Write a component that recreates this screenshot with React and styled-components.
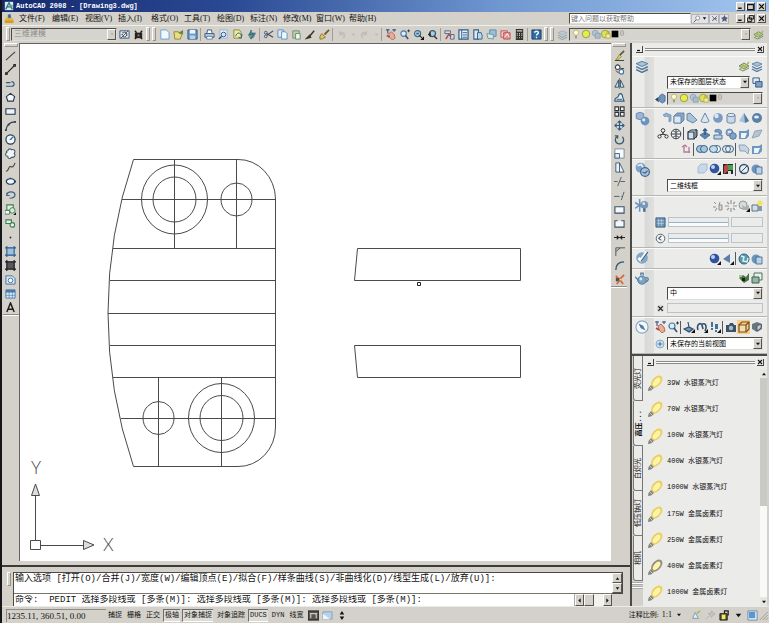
import React from 'react';
import styled, { createGlobalStyle, css } from 'styled-components';

const GlobalStyle = createGlobalStyle`
  * {
    box-sizing: border-box;
  }
  html, body, #root {
    height: 100%;
  }
  body {
    margin: 0;
    overflow: hidden;
    background: #d4d1ca;
  }
  button, input, select {
    margin: 0;
    padding: 0;
    border: 0;
    border-radius: 0;
    background: none;
    color: inherit;
    font: inherit;
  }
  ul {
    margin: 0;
    padding: 0;
    list-style: none;
  }
  svg {
    display: block;
    flex: none;
  }
`;

const mono = '"Liberation Mono", "Noto Sans CJK SC", monospace';
const serif = '"Liberation Serif", "Noto Sans CJK SC", serif';

const raised = css`
  border: 1px solid;
  border-color: #fbfbf9 #55534f #55534f #fbfbf9;
  background: #d4d1ca;
`;

const sunken = css`
  border: 1px solid;
  border-color: #4c4b48 #dfddd8 #dfddd8 #4c4b48;
`;

const Window = styled.div`
  display: flex;
  flex-direction: column;
  height: 100%;
  border-left: 2px solid #17171a;
  background: #d4d1ca;
  color: #111;
  font: 8px/10px ${serif};
`;

/* title bar and menus */

const TitleBar = styled.header`
  display: flex;
  align-items: center;
  gap: 2px;
  height: 12px;
  padding: 0 3px 0 2px;
  background: linear-gradient(90deg, #15296f, #2b4a94 30%, #6f97d0 65%, #a3c6ee);
  color: #fff;
`;

const Title = styled.h1`
  flex: 1;
  margin: 0;
  font: bold 7px/10px ${mono};
`;

const Caption = styled.div`
  display: flex;
  gap: 1px;
`;

const CaptionButton = styled.button`
  ${raised}
  display: grid;
  place-items: center;
  width: 9px;
  height: 9px;
  &:last-child {
    margin-left: 1px;
  }
`;

const MenuBar = styled.nav`
  display: flex;
  align-items: center;
  height: 13px;
  padding: 0 3px 0 2px;
`;

const MenuItem = styled.button`
  width: 33px;
  text-align: left;
  white-space: nowrap;
`;

const MenuLogo = styled.span`
  width: 15px;
`;

const Spacer = styled.div`
  flex: 1;
`;

const Search = styled.input`
  ${sunken}
  width: 122px;
  height: 11px;
  padding-left: 1px;
  background: #fff;
  font-size: 7px;
  &::placeholder {
    color: #777;
  }
`;

const InfoButton = styled.button`
  display: flex;
  align-items: center;
  justify-content: center;
  width: ${(p) => (p.$wide ? 18 : 10)}px;
  height: 10px;
  border: 1px solid #b4b5bb;
  background: #e3e3e6;
`;

const InfoGroup = styled.div`
  display: flex;
  margin-right: 7px;
`;

/* tool bars */

const ToolRow = styled.div`
  display: flex;
  align-items: center;
  height: 17px;
  padding: 0 4px 0 3px;
  border-top: 1px solid #efeeea;
`;

const Grip = styled.span`
  flex: none;
  width: ${(p) => (p.$flat ? '14px' : '4px')};
  height: ${(p) => (p.$flat ? '4px' : '14px')};
  margin: ${(p) => (p.$flat ? '1px 0' : '0 1px')};
  border: 1px solid;
  border-color: #fff #96938d #96938d #fff;
`;

const Tool = styled.button`
  display: grid;
  place-items: center;
  flex: none;
  width: ${(p) => p.$w || 14}px;
  height: 14px;
  opacity: ${(p) => (p.$faint ? 0.45 : 1)};
  background: ${(p) => (p.$on ? '#f8cd87' : 'none')};
`;

const Divider = styled.i`
  flex: none;
  width: 1px;
  height: 13px;
  margin: 0 1px;
  background: ${(p) => (p.$dark ? '#55575c' : '#a19e98')};
`;

const Combo = styled.div`
  ${sunken}
  display: flex;
  align-items: center;
  flex: ${(p) => (p.$width ? 'none' : 1)};
  width: ${(p) => (p.$width ? p.$width + 'px' : 'auto')};
  min-width: 0;
  height: 13px;
  padding-left: 1px;
  background: ${(p) => (p.$off ? '#d6d4ce' : '#fff')};
  color: ${(p) => (p.$off ? '#8d8b87' : '#000')};
  font-size: ${(p) => p.$size || 7}px;
`;

const Select = styled.select`
  flex: 1;
  min-width: 0;
  padding-left: 1px;
  appearance: none;
  opacity: 1;
  outline: none;
`;

const Arrow = styled.span`
  ${raised}
  display: grid;
  place-items: center;
  flex: none;
  width: 9px;
  height: 100%;
`;

/* body */

const Body = styled.main`
  display: flex;
  flex: 1;
  min-height: 0;
`;

const Workspace = styled.div`
  display: flex;
  flex-direction: column;
  flex: 1;
  min-width: 0;
`;

const Stage = styled.div`
  display: flex;
  flex: 1;
  min-height: 0;
`;

const ToolColumn = styled.div`
  display: flex;
  flex-direction: column;
  align-items: center;
  flex: none;
  padding-right: ${(p) => (p.$right ? 3 : 0)}px;
  width: ${(p) => (p.$right ? 19 : 17)}px;
`;

const ColumnEnd = styled.i`
  width: 16px;
  height: 2px;
  border-top: 1px solid #908d87;
  background: #fff;
`;

const Canvas = styled.div`
  flex: 1;
  min-width: 0;
  margin: 1px 0 4px;
  border: solid #65635f;
  border-width: 1px 0 0 1px;
  background: #fff;
`;

const Command = styled.section`
  display: flex;
  height: 41px;
  padding: 5px 7px 0 4px;
  border-top: 2px solid #3c3b39;
  font: 9px/11px ${mono};
`;

const CommandText = styled.div`
  display: flex;
  flex-direction: column;
  flex: 1;
  min-width: 0;
  margin-left: 1px;
  border: solid #4a4946;
  border-width: 1px 0 0 1px;
  background: #fff;
`;

const History = styled.div`
  height: 21px;
  border-bottom: 1px solid #77756f;
  padding-left: 1px;
  line-height: 12px;
  white-space: nowrap;
`;

const Prompt = styled.div`
  display: flex;
  flex: 1;
  min-height: 0;
`;

const PromptInput = styled.input`
  flex: 1;
  min-width: 0;
  padding-left: 1px;
  outline: none;
`;

const ScrollButton = styled.button`
  ${raised}
  display: grid;
  place-items: center;
  width: ${(p) => p.$w || 9}px;
  height: ${(p) => p.$h || 10}px;
`;

const VScroll = styled.div`
  display: flex;
  flex-direction: column;
  width: 11px;
  height: 22px;
  border: solid #4a4946;
  border-width: 1px 1px 1px 0;
`;

const HScroll = styled.div`
  display: flex;
  width: 38px;
  border-left: 1px solid #aaa;
  background: #f3f2ef;
`;

const HThumb = styled.i`
  ${raised}
  width: 10px;
  height: 12px;
`;

/* dashboard */

const Side = styled.aside`
  display: flex;
  flex-direction: column;
  flex: none;
  width: 139px;
  margin-top: 1px;
  border-left: 2px solid #4b4a48;
  border-right: 2px solid #d4d1ca;
  background: #ebebea;
`;

const PaletteBar = styled.div`
  display: flex;
  align-items: center;
  gap: 2px;
  height: 13px;
  padding: 0 3px 0 4px;
`;

const PaletteGrip = styled.span`
  flex: 1;
  height: 3px;
  border: solid #8b8984;
  border-width: 1px 0;
  background: #fff;
`;

const MiniButton = styled.button`
  display: grid;
  place-items: center;
  width: 7px;
  height: 7px;
  border: solid #444;
  border-width: 0 1px 1px 0;
`;

const Panel = styled.section`
  display: flex;
  height: ${(p) => p.$h}px;
  border-bottom: 1px solid #b5b5b3;
  border-top: 1px solid #fafafa;
`;

const PanelIcon = styled.div`
  flex: none;
  width: 22px;
  padding: 2px 0 0 3px;
  background: linear-gradient(90deg, #ebebea 55%, #d9d9d7 60%, #dfdfdd);
`;

const PanelRows = styled.div`
  display: flex;
  flex-direction: column;
  justify-content: space-evenly;
  flex: 1;
  min-width: 0;
  padding-right: 4px;
`;

const Row = styled.div`
  display: flex;
  align-items: center;
  justify-content: flex-end;
  gap: ${(p) => (p.$gap ? p.$gap + 'px' : 0)};
  height: 14px;
`;

const Indent = styled.div`
  display: flex;
  justify-content: center;
  flex: none;
  width: 12px;
`;

const Slider = styled.input`
  appearance: none;
  flex: 2;
  min-width: 0;
  height: 10px;
  border: 1px solid #b9c4cd;
  background: linear-gradient(#ebebea 4px, #93b2c8 4px 5px, #fafafa 5px);
  &::-webkit-slider-thumb {
    appearance: none;
    width: 1px;
    height: 8px;
  }
`;

const Field = styled.input`
  flex: 1;
  min-width: 0;
  height: 10px;
  border: 1px solid #b9c4cd;
`;

/* tool palettes */

const Palettes = styled.section`
  display: flex;
  flex: 1;
  min-height: 0;
  border-top: 2px solid #4b4a48;
`;

const Tabs = styled.div`
  display: flex;
  flex-direction: column;
  flex: none;
  width: 11px;
  background: #d4d1ca;
`;

const Tab = styled.button`
  display: flex;
  align-items: center;
  justify-content: center;
  height: 45px;
  margin-left: 1px;
  border: solid #777;
  border-width: 0 ${(p) => (p.$active ? 0 : 1)}px 1px 1px;
  border-bottom-left-radius: 3px;
  background: #ebebea;
  font: ${(p) => (p.$active ? 'bold' : 'normal')} 7px/8px ${mono};
`;

const TabText = styled.span`
  writing-mode: vertical-rl;
  text-orientation: sideways;
  transform: rotate(180deg);
  white-space: nowrap;
`;

const TabGrip = styled.i`
  height: 3px;
  margin-top: 1px;
  border: solid #aaa;
  border-width: 1px 0;
  background: #fff;
`;

const PaletteMain = styled.div`
  display: flex;
  flex-direction: column;
  flex: 1;
  min-width: 0;
`;

const PaletteContent = styled.div`
  display: flex;
  flex: 1;
  min-height: 0;
`;

const Lamps = styled.ul`
  display: flex;
  flex-direction: column;
  flex: 1;
  padding-top: 1px;
  font: 7px/9px ${mono};
`;

const LampItem = styled.li`
  display: flex;
  flex: 1;
`;

const LampButton = styled.button`
  display: flex;
  align-items: center;
  gap: 3px;
  padding-left: 3px;
  white-space: nowrap;
`;

const Scroll = styled.div`
  display: flex;
  flex-direction: column;
  align-items: center;
  width: 7px;
  background: #f9f9f8;
`;

const ScrollEnd = styled.button`
  display: grid;
  place-items: center;
  width: 7px;
  height: 9px;
  background: #e6e6e4;
`;

const Thumb = styled.i`
  width: 7px;
  height: 128px;
  background: #c9c9c6;
`;

/* status bar */

const StatusBar = styled.footer`
  display: flex;
  align-items: center;
  height: 17px;
  padding: 0 1px 0 4px;
  border-top: 1px solid #eceae6;
  white-space: nowrap;
`;

const Coords = styled.output`
  width: 100px;
  height: 13px;
  border: solid #8f8c86;
  border-width: 1px 0 0 1px;
  font-size: 9px;
  line-height: 12px;
`;

const Toggle = styled.button`
  display: flex;
  align-items: center;
  height: 13px;
  margin-right: 2px;
  padding: 0 1px;
  border: 1px solid;
  border-width: 1px 0 1px 1px;
  border-color: ${(p) => (p.$on ? '#6f6d69 #fff #fff #6f6d69' : 'transparent')};
  background: ${(p) => (p.$on ? '#dedcd7' : 'none')};
  font: 7px/10px ${mono};
`;

const Scale = styled.button`
  display: flex;
  align-items: center;
  gap: 3px;
  margin-right: 6px;
  font-size: 8px;
`;

const ScaleLabel = styled.span`
  font-size: 7px;
`;

const B = '#36587f';
const L = '#8fb4d6';
const G = '#3f7d52';

// every glyph is drawn on a 12 x 12 grid
const glyphs = {
  logo: <><path d="M1 1h10v10H1z" fill="#dfe9ec" /><path d="M2 10L6 2l4 8M3 7h7" stroke="#287a78" fill="none" strokeWidth="1.6" /><path d="M6 4l5 1-3 3z" fill="#5ca298" /></>,
  doc: <><path d="M1 7l4-5 2 3 3 1 1 5H1z" fill="#e7b93a" /><path d="M4 2l3-1 1 4-3 1z" fill="#3c6ea8" /><path d="M1 8h9v3H1z" fill="#d79b20" /></>,
  gear: <><path d="M1 2h10v8H1z" fill="#e5edf2" stroke={B} /><circle cx="6" cy="6" r="2.5" fill="none" stroke="#555" strokeWidth="1.5" strokeDasharray="1.4 .7" /><path d="M2 10l8-8" stroke={B} /></>,
  home: <><path d="M2 2l2 2M10 2L8 4M2 11l2-2M10 11L8 9" stroke="#222" strokeWidth="1.6" /><path d="M2 4h8v6H2z" fill="#222" /><path d="M5 6h2v2H5z" fill="#888" /></>,
  page: <path d="M2 1h6l3 3v7H2z" fill="#eff8ff" stroke="#6f9cc6" />,
  open: <><path d="M1 3h5l1 2h3l-2 6H2z" fill="#e9dc82" stroke="#93862f" /><path d="M6 4l5-3v5" fill="#5b8c3f" /></>,
  save: <><path d="M1 1h10v10H1z" fill="#649bcb" stroke={B} /><path d="M3 1h6v4H3z" fill="#eef5fb" /><path d="M3 7h6v4H3z" fill="#b9d0e6" /></>,
  print: <><path d="M3 5l1-4h4l1 4" fill="#fff" stroke={B} /><path d="M1 5h10v4H1z" fill="#b8c9dc" stroke={B} /><path d="M3 8h6v3H3z" fill="#fff" stroke={B} strokeWidth=".7" /></>,
  preview: <><path d="M2 1h8v9H2z" fill="#e4f1fb" stroke={L} /><circle cx="6" cy="6" r="2.5" fill="#cfe6f8" stroke={B} /><path d="M4 8l-3 3" stroke={B} strokeWidth="1.6" /></>,
  publish: <><path d="M2 1h6l2 3v6H2z" fill="#ecec9c" stroke="#7f8c45" /><path d="M4 8c1-5 6-4 6-1l1-1-1 4-3-1" fill="none" stroke={B} /></>,
  dwf: <><path d="M2 6l4-3 5 2-3 5-4 0z" fill="#6d9a8d" /><path d="M6 1l-2 5 5-1-4 6" fill="none" stroke="#3d7085" strokeWidth="1.6" /></>,
  cut: <><path d="M11 2L4 7M11 9L4 5" stroke="#445" strokeWidth="1.2" /><circle cx="3" cy="4" r="1.5" fill="none" stroke={B} /><circle cx="3" cy="8" r="1.5" fill="none" stroke={B} /></>,
  copy: <><path d="M1 1h6v8H1z" fill="#d9ecfa" stroke="#5d8ebb" /><path d="M5 3h4l2 2v6H5z" fill="#eff8ff" stroke="#5d8ebb" /></>,
  paste: <><path d="M2 2h7v8H2z" fill="#c9c9a5" stroke="#6a8f74" /><path d="M5 5h5v6H5z" fill="#eefaf2" stroke="#5e8b78" /></>,
  match: <path d="M10 2L5 8M5 7l-3 3 4-1z" stroke="#37352c" strokeWidth="1.6" fill="#37352c" />,
  brush: <><path d="M11 1L6 6" stroke="#735c2a" strokeWidth="2" /><path d="M3 5l4 4-4 2H1V8z" fill="#e2c35a" stroke="#70612a" strokeWidth=".8" /></>,
  undo: <path d="M8 10C11 6 8 2 4 5M4 2v4h4" fill="none" stroke="#aaa69f" strokeWidth="1.4" />,
  redo: <path d="M4 10C1 6 4 2 8 5M8 2v4H4" fill="none" stroke="#aaa69f" strokeWidth="1.4" />,
  dot: <path d="M4 5h4L6 8z" fill="#aaa69f" />,
  pan: <><path d="M4 5l3-2 3 3 1 4-3 2-3-3z" fill="#e9ad96" stroke="#9b5a4c" strokeWidth=".8" /><path d="M1 1h4M3 0v5M8 1h4M10 0v3" stroke="#3d5d86" strokeWidth="1.200" /><path d="M2 7l3 2" stroke="#b44646" strokeWidth="1.8" /></>,
  zoom: <><circle cx="5" cy="5" r="3" fill="#d8edfa" stroke="#4c7698" strokeWidth="1.2" /><path d="M7 7l3 4" stroke="#42526b" strokeWidth="1.7" /><path d="M9 2h3M10.500 .5v3" stroke="#333" /></>,
  zoomWin: <><circle cx="5" cy="5" r="3.300" fill="#b9d9ed" stroke="#3f6987" strokeWidth="1.3" /><path d="M3.500 4h3v2h-3z" fill="#426c8c" /><path d="M7 7l3 3" stroke="#333" strokeWidth="1.4" /><path d="M12 8v4H8z" fill="#111" /></>,
  zoomPrev: <><circle cx="6" cy="5" r="3.300" fill="#aecce0" stroke="#36586f" strokeWidth="1.3" /><path d="M8 8l3 3" stroke="#333" strokeWidth="1.5" /><path d="M1 6l3-3v6z" fill="#222" /></>,
  props: <><path d="M1 2h6v3H1zM7 6h4v5H7z" fill="#d9dce8" stroke="#555f80" /><path d="M2 11l3-5 3 2" stroke="#a64646" fill="none" strokeWidth="1.5" /></>,
  sheet: <><path d="M1 1h10v10H1z" fill="#e6f1f8" stroke="#31608d" strokeWidth="1.3" /><path d="M4 1v10M5 4h5M5 6.500h5M5 9h5" stroke="#31608d" /></>,
  palette: <><path d="M2 1h5v10H2z" fill="#dceaf3" stroke="#31608d" strokeWidth="1.2" /><path d="M6 4h4l1 3v4H6z" fill="#bcd6e7" stroke="#31608d" /></>,
  sheetSet: <><path d="M4 1h7v7H4z" fill="#9cc0d8" stroke="#5d89a9" /><path d="M1 5l7 1v5l-6-1z" fill="#d7e7e9" stroke="#70969e" /></>,
  markup: <><path d="M1 2h7v7H1z" fill="#f3c5c5" stroke="#bb5454" /><path d="M4 4h7v7H4z" fill="#e69090" stroke="#bb5454" /><path d="M5 9l3-4 2 4" stroke="#fff" fill="none" /></>,
  calc: <><path d="M2 0h8v12H2z" fill="#2f302e" /><path d="M3 2h6M3 5h1M5.500 5h1M8 5h1M3 7h1M5.500 7h1M8 7h1M3 9.500h1M5.500 9.500h1M8 9.500h1" stroke="#d4d1ca" strokeWidth="1.2" /></>,
  help: <><path d="M1 1h10v10H1z" fill="#2e6ba9" stroke="#1c3f70" /><path d="M4 4c0-2 4-2 4 0S6 5 6 7M6 8.500v1.500" stroke="#fff" fill="none" strokeWidth="1.5" /></>,
  layers: <><path d="M1 4l5-2 5 2-5 2.500z" fill="#a8c2da" stroke="#51779e" strokeWidth=".8" /><path d="M1 6.500l5 2.500 5-2.500M1 9l5 2.500L11 9" fill="none" stroke="#51779e" strokeWidth="1.300" /></>,
  layerGo: <><path d="M1 6l5-3 5 3-5 3z" fill="#c3cfbb" stroke="#6f8a6c" /><path d="M1 9l4 2 6-3" fill="none" stroke="#6f8a6c" /><path d="M2 10l3-5 2 2 4-5" stroke="#a8b843" fill="none" strokeWidth="1.5" /></>,
  layerWin: <><path d="M1 1h7v6H1z" fill="#dce9f4" stroke={B} /><path d="M4 5h7v6H4z" fill="#7ba2c7" stroke={B} /></>,
  layerPrev: <><path d="M5 3l3-2 3 2v6l-3 2-3-2z" fill="#6f97c0" stroke="#3d618a" strokeWidth=".8" /><path d="M4 4L0 7l4 3z" fill="#28466a" /></>,
  bulb: <><circle cx="6" cy="4.500" r="3.200" fill="#fdfbcf" stroke="#aa9d50" strokeWidth=".8" /><path d="M5 8h2v3H5z" fill="#8e8c79" /></>,
  sun: <circle cx="6" cy="6" r="4.500" fill="#e6ee4c" stroke="#8d9134" />,
  freeze: <><circle cx="5" cy="5" r="3.500" fill="#b6c7d5" stroke="#8a9fae" /><path d="M5 5h6v6H5z" fill="#a9bccb" stroke="#8a9fae" /></>,
  lock: <><circle cx="5" cy="6" r="4.500" fill="#dce15c" stroke="#969a38" /><path d="M6 6h5v5H6z" fill="#f3ef9a" stroke="#b0ab48" /><path d="M7 6V3h3v3" fill="none" stroke="#b0ab48" /></>,
  black: <path d="M1 1h10v10H1z" fill="#000" />,
  find: <><circle cx="7" cy="4.500" r="3" fill="#fff" stroke="#667" /><path d="M5 7l-4 4" stroke="#667" strokeWidth="1.500" /></>,
  comm: <path d="M2 2l8 8M10 2L6 6l4 0M2 10l4-3H3" stroke="#4c566e" fill="none" strokeWidth="1.300" />,
  star: <path d="M6 0l2 4 4 .5-3 3 1 4.500-4-2.500L2 12l1-4.500-3-3L4 4z" fill="#4d5d7a" />,
  line: <path d="M1 11L11 2" stroke="#3b4044" strokeWidth="1.200" />,
  xline: <><path d="M1 11L11 1" stroke="#222" strokeWidth="1.400" /><path d="M0 9h3v3H0zM9 0h3v3H9z" fill="#333" /></>,
  pline: <path d="M1 9h6c4 0 4-5 0-5M1 5h5" fill="none" stroke={B} strokeWidth="1.200" />,
  polygon: <path d="M6 1.500l4.500 3.500L9 10H3L1.500 5z" fill="#f5f8fb" stroke="#23374f" strokeWidth="1.200" />,
  rect: <path d="M1 3h10v6H1z" fill="#eef4fa" stroke="#23374f" strokeWidth="1.200" />,
  arc: <><path d="M1 11C2 5 5 2 11 2" fill="none" stroke="#333f4e" strokeWidth="1.200" /><path d="M0 10h2v2H0zM3 4h2v2H3zM10 1h2v2h-2z" fill="#333f4e" /></>,
  circle: <><circle cx="6" cy="6" r="5" fill="#f3f8fc" stroke="#23374f" strokeWidth="1.300" /><path d="M6 6l3-3M5 6h2" stroke="#2e7090" strokeWidth="1.300" /></>,
  cloud: <path d="M3 3c1-3 4-2 4-1 3-1 5 1 3 4 2 2 0 5-3 4-1 2-4 2-4-1-3 0-3-3-1-4C1 4 2 3 3 3z" fill="#f1f6f8" stroke="#4b5a67" strokeWidth="1.200" />,
  spline: <path d="M1 10c3 1 3-6 5-5s3 1 5-4" fill="none" stroke="#444" strokeWidth="1.200" />,
  ellipse: <><ellipse cx="6" cy="6" rx="4.500" ry="3" fill="#f4f8fc" stroke="#1f3d68" strokeWidth="1.300" /><path d="M1 5h1v2H1zM10 5h2v2h-2zM5 2h2v1H5z" fill="#1f3d68" /></>,
  earc: <path d="M2 5c1-4 8-4 9 0 0 3-3 4-6 4M2 3v3h3" fill="none" stroke="#3d6282" strokeWidth="1.300" />,
  insert: <><path d="M2 1h7v6H2z" fill="#e2efe2" stroke={G} strokeWidth="1.200" /><circle cx="8" cy="7" r="3" fill="#d3e7d3" stroke={G} /><path d="M0 7h5v4H0z" fill="#fff" stroke={G} /><path d="M12 9v3H9z" fill="#111" /></>,
  block: <><path d="M1 2h6v4H1z" fill="#e5f2e5" stroke={G} strokeWidth="1.200" /><circle cx="8" cy="7.500" r="2.500" fill="#e5f2e5" stroke={G} strokeWidth="1.200" /></>,
  point: <circle cx="6" cy="6" r="1" fill="#333" />,
  hatch: <><path d="M2 2h8v8H2z" fill="#9fc1e0" /><path d="M2 0v12M10 0v12M0 2h12M0 10h12" stroke="#2b5a8b" strokeWidth="1.200" /></>,
  gradient: <><path d="M2 2h8v8H2z" fill="#56585c" /><path d="M2 0v12M10 0v12M0 2h12M0 10h12" stroke="#1a1b1d" strokeWidth="1.300" /></>,
  region: <><path d="M1 2h7l3 3v6H1z" fill="#d5e8f5" stroke="#3f6f99" /><circle cx="6" cy="7" r="2.500" fill="#fff" stroke="#3f6f99" /></>,
  table: <><path d="M1 2h10v9H1z" fill="#d9ebf8" stroke="#4b7bab" /><path d="M1 2h10v3H1z" fill="#4b7bab" /><path d="M4.500 4v7M8 4v7M1 8h10" stroke="#4b7bab" strokeWidth=".7" /></>,
  textA: <path d="M2 11L6 1l4 10M3.500 8h5" fill="none" stroke="#1c1c1c" strokeWidth="1.600" />,
  erase: <><path d="M11 1L6 6" stroke="#4c5a3a" strokeWidth="1.800" /><path d="M6 5l2 2-4 4H2z" fill="#e6d36b" stroke="#7d7135" strokeWidth=".8" /><path d="M1 11.500h10" stroke="#333" /></>,
  copyObj: <><circle cx="4" cy="3.500" r="2.500" fill="#fff" stroke="#333f4e" strokeWidth="1.200" /><circle cx="8" cy="8.500" r="2.500" fill="#fff" stroke="#3f6f99" strokeWidth="1.200" /><path d="M2 7l3 3M7 5h4" stroke="#333" /></>,
  mirror: <><path d="M5 2v8H1zM7 2v8h4z" fill="#d7e5ee" stroke="#2f4b66" /><path d="M6 0v12" stroke="#2f4b66" strokeWidth=".6" /></>,
  offset: <><path d="M1 10c-1-5 4-3 4-6 0-3 4-3 4 0l2 6z" fill="#e3edf3" stroke="#315878" strokeWidth="1.200" /><path d="M3 8h6" stroke="#315878" /></>,
  array: <path d="M1 1h4v4H1zM7 1h4v4H7zM1 7h4v4H1zM7 7h4v4H7z" fill="#eef2f5" stroke="#30343a" strokeWidth="1.200" />,
  move: <path d="M6 1v10M1 6h10M4 3l2-2 2 2M4 9l2 2 2-2M3 4L1 6l2 2M9 4l2 2-2 2" fill="none" stroke="#2d5b87" strokeWidth="1.200" />,
  rotate: <path d="M3 3a4.500 4.500 0 1 0 6 0M1 2h3v3" fill="none" stroke="#385a72" strokeWidth="1.400" />,
  scale: <><path d="M1 1h10v10H1z" fill="#fafcff" stroke="#758b9d" /><path d="M1 6h5v5H1z" fill="#dfeaf1" stroke="#41627d" /></>,
  stretch: <path d="M2 1h4v10H2zM6 1l5 10H6" fill="#eef4f9" stroke="#3d5972" />,
  trim: <path d="M0 6h4M7 6h5M8 1L4 11" stroke="#4e5d6a" fill="none" />,
  extend: <path d="M0 7h6M8 7h1M11 2L8 11" stroke="#4e5d6a" fill="none" />,
  breakAt: <path d="M1 3h10v7H1z" fill="#f4f8fb" stroke="#3b5068" strokeWidth="1.200" />,
  breakObj: <path d="M4 3H1v7h10V3H8" fill="#f4f8fb" stroke="#3b5068" strokeWidth="1.200" />,
  join: <path d="M0 6h12M3 4l2 2-2 2M9 4L7 6l2 2" stroke="#222" fill="none" strokeWidth="1.200" />,
  chamfer: <path d="M2 11V6l5-4h5M2 6V2h5" stroke="#4a5158" fill="none" />,
  fillet: <path d="M2 11c0-6 3-9 9-9" stroke="#2f5879" fill="none" strokeWidth="1.500" />,
  explode: <><path d="M2 4h4v4H2z" fill="#5b4b40" /><path d="M6 7l-3 4M7 5l4-4M7 7l3 4M4 4L2 2" stroke="#d8662e" strokeWidth="1.800" /></>,
  box: <><path d="M1 4l3-3h7v7l-3 3H1z" fill="#89a9c8" stroke="#52759a" strokeWidth=".8" /><path d="M1 4h7v7H1z" fill="#dbe8f3" stroke="#52759a" strokeWidth=".8" /></>,
  polysolid: <path d="M3 3l3-2 5 2v6l-2 1V5L6 4 5 5z" fill="#8fb0ce" stroke="#6a8cb0" strokeWidth=".7" />,
  wedge: <path d="M1 2l3-1 7 7-4 3-6-3z" fill="#a9c2da" stroke="#5c7c9c" strokeWidth=".9" />,
  cone: <path d="M6 1l4 8c0 2-8 2-8 0z" fill="#dae6f0" stroke="#5c7c9c" strokeWidth=".9" />,
  sphere: <><circle cx="6" cy="6" r="4.800" fill="#7799c2" /><circle cx="4.500" cy="4" r="2.200" fill="#d9e6f5" /></>,
  cylinder: <><path d="M2 3v7c0 1.500 8 1.500 8 0V3z" fill="#c9d9e8" stroke="#5c7c9c" strokeWidth=".9" /><ellipse cx="6" cy="3" rx="4" ry="1.500" fill="#f0f5fa" stroke="#5c7c9c" strokeWidth=".9" /></>,
  pyramid: <><path d="M6 1l5 8-4 2-6-2z" fill="#a8c3de" /><path d="M6 1l1 10 4-2z" fill="#547aa3" /></>,
  torus: <><circle cx="6" cy="6" r="5" fill="#5d80a8" /><ellipse cx="5.500" cy="5" rx="2.500" ry="1.600" fill="#e6eef6" /></>,
  helix: <><circle cx="6" cy="2.500" r="1.800" fill="#fff" stroke="#333" /><circle cx="2.500" cy="8.500" r="1.600" fill="#fff" stroke="#333" /><circle cx="9.500" cy="8.500" r="1.600" fill="#fff" stroke="#333" /><path d="M6 4v3M3 7l3-1 3 1" fill="none" stroke="#333" /></>,
  globe: <><circle cx="6" cy="6" r="4.800" fill="#f2f5f6" stroke="#3c4348" /><path d="M6 1v10M1 6h10M3 2.500c2 2 4 2 6 0M3 9.500c2-2 4-2 6 0" fill="none" stroke="#3c4348" /></>,
  extrude: <><path d="M2 4h6v7H2z" fill="#d4e2ee" stroke="#1e2f40" strokeWidth="1.200" /><path d="M2 4l3-2h6v6l-3 3M10 1v9" fill="none" stroke="#1e2f40" /></>,
  press: <><path d="M1 7l5-3 5 3-5 4z" fill="#5b83ad" stroke="#385f88" strokeWidth=".7" /><path d="M6 1v6M4 3l2-2 2 2" stroke="#2f5c88" strokeWidth="1.500" fill="none" /></>,
  sweep: <><path d="M3 2c5-2 8 1 6 4H7V4H3z" fill="#7da1c6" stroke="#4d75a0" strokeWidth=".8" /><path d="M2 7h8v4H2z" fill="#bfd3e6" stroke="#4d75a0" /></>,
  solids: <><circle cx="4.500" cy="4.500" r="3.500" fill="#8fadd0" stroke="#54779c" strokeWidth=".8" /><circle cx="8" cy="8" r="3.300" fill="#7fa3ca" stroke="#48698e" strokeWidth=".8" /><path d="M3 3h3v2H3z" fill="#dce8f4" /></>,
  modeling: <><path d="M1 2l3-1 3 1v4L4 7 1 6z" fill="#9ab6d2" stroke="#5f82a8" strokeWidth=".7" /><circle cx="8" cy="8" r="3.500" fill="#6c92be" /><circle cx="7" cy="7" r="1.300" fill="#dbe8f5" /></>,
  loft: <><path d="M1 3h7l3-2v7l-3 3H1z" fill="#6f96bf" /><path d="M3 5h6l-2 5H3z" fill="#eef4fa" /></>,
  plane: <path d="M4 3l7-1-3 6-7 2z" fill="#b6c4d3" stroke="#8798aa" strokeWidth=".8" />,
  ucs: <path d="M4 2v7h6M2 4l3-2 2 2M9 4v6" stroke="#b57997" fill="none" strokeWidth="1.300" />,
  union: <><ellipse cx="4.500" cy="6" rx="4" ry="3.500" fill="#a6c6dc" stroke="#37658a" /><ellipse cx="8" cy="6" rx="3.500" ry="3.500" fill="#a6c6dc" stroke="#37658a" /></>,
  subtract: <><ellipse cx="8" cy="6" rx="3.500" ry="3.500" fill="#fff" stroke="#37658a" /><ellipse cx="4.500" cy="6" rx="4" ry="3.500" fill="#c3dbe9" stroke="#37658a" /></>,
  intersect: <><ellipse cx="4.500" cy="6" rx="4" ry="3.500" fill="none" stroke="#37658a" /><ellipse cx="7.500" cy="6" rx="4" ry="3.500" fill="none" stroke="#37658a" /></>,
  slice: <path d="M1 2h6l4 4-1 5-3-3H2z" fill="#c6d5e2" stroke="#8ba2b6" />,
  visual: <path d="M2 4l3-3h6v6l-3 3H2z" fill="#c8d8ea" stroke="#9bb2cc" strokeWidth=".8" />,
  ball: <><circle cx="5.500" cy="5.500" r="4.800" fill="#3153a0" /><circle cx="4" cy="4" r="2" fill="#bfd0ef" /><path d="M12 8v4H8z" fill="#111" /></>,
  rgb: <><path d="M1 1h10v10H1z" fill="#252b2b" /><path d="M2 3l4-2v7l-4 3z" fill="#c44747" /><path d="M6 2h5v5H6z" fill="#49a34c" /><path d="M6 8h3v3H6z" fill="#d8dfe6" /></>,
  noEye: <><circle cx="6" cy="6" r="4.500" fill="#e3edf3" stroke="#34536a" strokeWidth="1.300" /><path d="M3 9l6-6" stroke="#34536a" /></>,
  vsMgr: <><circle cx="5" cy="6" r="4.500" fill="#6d94bc" /><path d="M5 4h6v7H5z" fill="#b9d2e8" stroke="#395f85" strokeWidth=".8" /></>,
  visualBig: <><circle cx="4.500" cy="4.500" r="4" fill="#7fa2c6" /><path d="M2 3l3-1 2 3" stroke="#e8f0f8" fill="none" strokeWidth="1.200" /><circle cx="8" cy="8" r="3.500" fill="#a9c3dd" stroke="#41678f" /><path d="M6 8l2 1 2-2" stroke="#41678f" fill="none" /></>,
  lightBall: <><path d="M4 0v11M0 3l8 5M0 8l7-5" stroke="#6d93b8" fill="none" strokeWidth="1.300" /><circle cx="8" cy="5" r="3.300" fill="#7699ba" /><circle cx="7.500" cy="4" r="1.200" fill="#dce8f3" /><path d="M7 8h2v3H7z" fill="#44698d" /></>,
  lightOff: <path d="M2 2l2 2M8 2L7 5M1 7h3M3 11l2-3M7 5h3v5H7z" stroke="#8d908f" fill="#d8dad9" />,
  burst: <path d="M6 0v4M6 8v4M0 6h4M8 6h4M2 2l2 2M8 8l2 2M10 2L8 4M4 8l-2 2" stroke="#969998" strokeWidth="1.200" />,
  shade: <><circle cx="5" cy="5" r="4" fill="#d9dbda" stroke="#939796" /><path d="M4 5l3 2 4-2v5H5z" fill="#aab0b2" /><path d="M12 8v4H8z" fill="#111" /></>,
  sunBox: <><path d="M1 5h6v6H1z" fill="#d4dfe7" stroke="#5f7386" /><path d="M7 6h4v5H7z" fill="#8499ac" /><circle cx="9" cy="3" r="2.500" fill="#f0e64c" /></>,
  grid: <><path d="M1 1h10v10H1z" fill="#6e94b6" stroke="#365b7c" /><path d="M4 2v8M7 2v8M2 4h8M2 7h8" stroke="#bfd5e8" strokeWidth=".7" /></>,
  clock: <><circle cx="6" cy="6" r="4.700" fill="#f5f7f8" stroke="#4f5d67" /><path d="M7 3L4 6l3 2" stroke="#4f5d67" fill="none" strokeWidth="1.200" /></>,
  material: <><circle cx="6" cy="6" r="5" fill="#83a7cb" /><path d="M10 1L5 8l-2-2" stroke="#fff" fill="none" strokeWidth="2.500" /><path d="M11 1L5 9" stroke="#36587f" /></>,
  cursor: <><path d="M1 6l7-5v9z" fill="#5b80aa" /><path d="M12 8v4H8z" fill="#111" /></>,
  world: <><circle cx="6" cy="6" r="5" fill="#5c9ab4" stroke="#2d6380" /><path d="M3 3l3 1-1 4 4 1 1-4" fill="none" stroke="#e3f2ec" strokeWidth="1.400" /></>,
  teapot: <><ellipse cx="6" cy="7" rx="3.700" ry="3.500" fill="#7ba3c8" stroke="#4d7499" strokeWidth=".7" /><path d="M0 4l3 3M9 5c4-1 2 4 0 3M5 3V1h2v2" stroke="#5b82a8" fill="none" strokeWidth="1.200" /><circle cx="5" cy="6" r="1.200" fill="#dce9f5" /></>,
  renderG: <><path d="M1 6l4-3 3 2 3-4v7l-5 3z" fill="#4a7443" /><path d="M4 6h3v3H4z" fill="#16211a" /><path d="M1 3h3v2H1z" fill="#a8c38e" /></>,
  renderWin: <><path d="M3 1h8v7H3z" fill="#e8efea" stroke="#52705f" /><path d="M1 5h7v6H1z" fill="#9bb5a5" stroke="#3d5f52" /></>,
  cancel: <><circle cx="6" cy="6" r="4.500" fill="#f0f0ee" stroke="#bbb" strokeWidth=".7" /><path d="M3 3l6 6M9 3L3 9" stroke="#222" strokeWidth="1.700" /></>,
  compass: <><circle cx="6" cy="6" r="5.200" fill="#f4f8fb" stroke="#89a8c4" /><path d="M3 3l4 2 2 4-4-2z" fill="#55779a" /></>,
  walk: <><path d="M5 1l1 5M1 8l5-2 4 2-4 3z" stroke="#2e4e70" fill="#7796b3" strokeWidth="1.200" /><path d="M12 8v4H8z" fill="#111" /></>,
  orbit: <><path d="M2 9c-2-6 3-8 4-5l1 4M5 4c5-4 6 2 4 6" fill="none" stroke="#31526e" strokeWidth="1.600" /><path d="M12 8v4H8z" fill="#111" /></>,
  steps: <><path d="M2 1h2v5H2zM6 3h3v5H6z" fill="#427294" /><path d="M2 7h2v2H2zM6 9h2v2H6z" fill="#427294" /><path d="M12 8v4H8z" fill="#111" /></>,
  camera: <><path d="M1 4h3l1-2h3l1 2h2v7H1z" fill="#3f5265" /><circle cx="6" cy="7" r="2.200" fill="#9fc2d8" /></>,
  ortho: <><path d="M1 4h7v7H1z" fill="#f7dba9" stroke="#75532a" strokeWidth="1.200" /><path d="M1 4l3-3h7v7l-3 3M8 4l3-3" fill="none" stroke="#75532a" strokeWidth="1.200" /></>,
  persp: <><path d="M1 3l5-2 5 2v5l-5 3-5-3z" fill="#6b7580" /><path d="M6 5l4-2v4l-4 3z" fill="#c5ced6" stroke="#3d464e" strokeWidth=".7" /></>,
  view: <><circle cx="6" cy="6" r="4.800" fill="#d4e5f3" stroke="#7aa0c0" /><path d="M6 3v6M3 6h6" stroke="#2f6189" /></>,
  model: <><path d="M0 1h12v10H0z" fill="#55534f" stroke="#161616" /><path d="M2 4h8M3 4v5M9 4v5" stroke="#c9c7c1" strokeWidth="1.300" /></>,
  paper: <><path d="M1 2h10v8H1z" fill="#b8d0e8" stroke="#87a0bb" /><path d="M1 10V4l8 6z" fill="#eef5fc" /></>,
  updown: <path d="M4 5h5L6.500 1zM4 7h5l-2.500 4z" fill="#111" />,
  annot: <><path d="M2 10l3-7 4 7z" fill="#e5eef3" stroke="#6c91ad" /><path d="M7 4l4-3" stroke="#a9b855" strokeWidth="1.800" /></>,
  annotAuto: <path d="M1 11l4-4M4 4l4 5 1-3 3-1-4-4-1 3z" stroke="#b0aea9" fill="#c7c5c0" />,
  unlock: <><path d="M1 4h8v7H1z" fill="#57541c" stroke="#222" /><path d="M3 5h4v5H3z" fill="#ece96d" /><path d="M6 4V1h4v5" fill="none" stroke="#222" strokeWidth="1.400" /></>,
  clean: <><path d="M1 1h10v10H1z" fill="#f0f6fb" stroke="#5f87ad" /><path d="M2 2h7v7H2z" fill="#5d96cc" /></>,
  resize: <path d="M1 12L12 1M5 12l7-7M9 12l3-3" stroke="#8f8c86" />,
  down: <path d="M3 4h6L6 8z" fill="#111" />,
  up: <path d="M3 8h6L6 4z" fill="#111" />,
  left: <path d="M8 2v8L4 6z" fill="#111" />,
  right: <path d="M4 2v8l4-4z" fill="#111" />,
  min: <path d="M2 9h6" stroke="#111" strokeWidth="2.500" />,
  max: <path d="M1 2h10v9H1zM1 3h10" fill="none" stroke="#111" strokeWidth="1.800" />,
  restore: <path d="M4 1h7v6H4zM1 5h7v6H1z" fill="none" stroke="#111" strokeWidth="1.600" />,
  close: <path d="M2 2l8 8M10 2l-8 8" stroke="#111" strokeWidth="2.200" />,
};

const Glyph = ({ name, size = 12 }) => (
  <svg width={size} height={size} viewBox="0 0 12 12" aria-hidden="true">
    {glyphs[name]}
  </svg>
);

// '|' puts a divider between two tools
const Tools = ({ names, dark, ...rest }) =>
  names.split(' ').map((name, i) =>
    name === '|' ? (
      <Divider key={i} $dark={dark} />
    ) : (
      <Tool
        key={i}
        aria-label={name}
        $w={name === 'dot' ? 9 : rest.w}
        $on={name === 'ortho'}
        $faint={name === 'undo' || name === 'redo' || name === 'dot'}
      >
        <Glyph name={name} size={rest.size} />
      </Tool>
    )
  );

const DropDown = ({ value, label, off, width, size, children }) => (
  <Combo $off={off} $width={width} $size={size}>
    {children}
    <Select aria-label={label} defaultValue={value}>
      <option>{value}</option>
    </Select>
    <Arrow>
      <Glyph name={off ? 'dot' : 'down'} size={8} />
    </Arrow>
  </Combo>
);

const LayerDropDown = () => (
  <DropDown value="0" label="图层" off size={8}>
    {['bulb', 'sun', 'freeze', 'lock', 'black'].map((name) => (
      <Glyph key={name} name={name} size={name === 'black' ? 8 : 10} />
    ))}
  </DropDown>
);

const PanelTools = ({ names }) => (
  <Row>
    <Tools names={names} dark w={13} size={12} />
  </Row>
);

const Lamp = ({ dark }) => (
  <svg width="18" height="18" viewBox="0 0 18 18" aria-hidden="true">
    <path d="M5 11C5 6 9 2 13 1.500c3 0 4 3 3 5.500-1 3-4 6-8 7z" fill={dark ? '#8f8f80' : '#e9cf62'} />
    <path d="M6.500 10.500C7 7 10 4 12.500 3.500c2 0 2.500 2 1.500 4-1 2-3 4-6 5z" fill="#fff3a8" />
    <path d="M5 11l3 3-3 2.500-3 .5.500-3z" fill="#85877c" />
    <path d="M3.500 12.500l3 3" stroke="#c9cbc0" />
  </svg>
);

const menus = ['文件(F)', '编辑(E)', '视图(V)', '插入(I)', '格式(O)', '工具(T)', '绘图(D)', '标注(N)', '修改(M)', '窗口(W)', '帮助(H)'];

const drawTools = 'line xline pline polygon rect arc circle cloud spline ellipse earc insert block point hatch gradient region table textA';

const modifyTools = 'erase copyObj mirror offset array move rotate scale stretch trim extend breakAt breakObj join chamfer fillet explode';

const lamps = [
  '39W 水银蒸汽灯',
  '70W 水银蒸汽灯',
  '100W 水银蒸汽灯',
  '400W 水银蒸汽灯',
  '1000W 水银蒸汽灯',
  '175W 金属卤素灯',
  '250W 金属卤素灯',
  '400W 金属卤素灯',
  '1000W 金属卤素灯',
];

const tabs = ['荧光灯', '高压...', '白炽光', '低压钠灯', '相机'];

const toggles = [
  ['捕捉', false],
  ['栅格', false],
  ['正交', false],
  ['极轴', true],
  ['对象捕捉', true],
  ['对象追踪', false],
  ['DUCS', true],
  ['DYN', false],
  ['线宽', false],
];

const Drawing = () => (
  <svg width="100%" height="100%" role="img" aria-label="Drawing3.dwg">
    <g transform="translate(-20 -44)" fill="none" stroke="#4a4a4a" strokeWidth="1">
      <path d="M133.500 159.500H238A37 40 0 0 1 275.500 199V427A37 39 0 0 1 238 466.500H133.500A475 475 0 0 1 133.500 159.500z" />
      <path d="M122 199.500H275M113 248.500H275M110 280.500H275M108 313.500H275M110 345.500H275M113 377.500H275M121 418.500H275" />
      <path d="M174.500 159V248M236.500 159V248M158.500 377V466M221.500 377V466" />
      <ellipse cx="174.500" cy="199.500" rx="33" ry="34.500" />
      <ellipse cx="174.500" cy="199.500" rx="21.500" ry="22.500" />
      <ellipse cx="236.500" cy="199.500" rx="15.500" ry="16.500" />
      <ellipse cx="158.500" cy="418" rx="15.500" ry="16.500" />
      <ellipse cx="221.500" cy="418" rx="33" ry="34.500" />
      <ellipse cx="221.500" cy="418" rx="21.500" ry="22.500" />
      <path d="M357.500 248.500H520.500V280.500H354.500zM354.500 345.500H520.500V377.500H357.500z" />
      <path d="M417.500 282.500h3v3h-3z" stroke="#222" />
      <path d="M30.500 540.500h10v9h-10zM35.500 540V496M40 545.500H83" />
      <path d="M31.500 495.500h8L35.500 484zM83.500 540.500v9L94 545z" fill="#ddd" />
    </g>
    <g transform="translate(-20 -44)" fill="#444" fontFamily="Lato, sans-serif" fontWeight="300" fontSize="17">
      <text x="31" y="474">Y</text>
      <text x="103" y="551">X</text>
    </g>
  </svg>
);

const Dashboard = () => (
  <>
    <PaletteBar>
      <MiniButton aria-label="最小化"><Glyph name="min" size={6} /></MiniButton>
      <PaletteGrip />
      <MiniButton aria-label="关闭"><Glyph name="close" size={6} /></MiniButton>
    </PaletteBar>
    <Panel $h={52}>
      <PanelIcon><Glyph name="layers" size={14} /></PanelIcon>
      <PanelRows>
        <PanelTools names="layerGo layers" />
        <Row $gap={1}>
          <Indent />
          <DropDown value="未保存的图层状态" label="图层状态" />
          <Tool aria-label="layerWin" $w={12}><Glyph name="layerWin" size={11} /></Tool>
        </Row>
        <Row $gap={1}>
          <Indent><Glyph name="layerPrev" size={11} /></Indent>
          <LayerDropDown />
        </Row>
      </PanelRows>
    </Panel>
    <Panel $h={51}>
      <PanelIcon><Glyph name="modeling" size={15} /></PanelIcon>
      <PanelRows>
        <PanelTools names="polysolid box wedge cone sphere cylinder pyramid torus" />
        <PanelTools names="helix globe | extrude press sweep solids loft plane" />
        <PanelTools names="ucs | union subtract intersect | slice loft" />
      </PanelRows>
    </Panel>
    <Panel $h={37}>
      <PanelIcon><Glyph name="visualBig" size={15} /></PanelIcon>
      <PanelRows>
        <PanelTools names="visual ball rgb | noEye vsMgr" />
        <Row $gap={1}>
          <Indent />
          <DropDown value="二维线框" label="视觉样式" />
        </Row>
      </PanelRows>
    </Panel>
    <Panel $h={52}>
      <PanelIcon><Glyph name="lightBall" size={14} /></PanelIcon>
      <PanelRows>
        <PanelTools names="lightOff burst shade sunBox" />
        <Row $gap={2}>
          <Indent><Glyph name="grid" size={11} /></Indent>
          <Slider type="range" aria-label="日期" />
          <Field aria-label="日期值" />
        </Row>
        <Row $gap={2}>
          <Indent><Glyph name="clock" size={11} /></Indent>
          <Slider type="range" aria-label="时间" />
          <Field aria-label="时间值" />
        </Row>
      </PanelRows>
    </Panel>
    <Panel $h={21}>
      <PanelIcon><Glyph name="material" size={14} /></PanelIcon>
      <PanelRows>
        <PanelTools names="ball cursor | world vsMgr" />
      </PanelRows>
    </Panel>
    <Panel $h={48}>
      <PanelIcon><Glyph name="teapot" size={14} /></PanelIcon>
      <PanelRows>
        <PanelTools names="renderG renderWin" />
        <Row $gap={1}>
          <Indent />
          <DropDown value="中" label="渲染预设" />
        </Row>
        <Row $gap={1}>
          <Indent><Glyph name="cancel" size={9} /></Indent>
          <Field aria-label="渲染进度" />
        </Row>
      </PanelRows>
    </Panel>
    <Panel $h={37}>
      <PanelIcon><Glyph name="compass" size={14} /></PanelIcon>
      <PanelRows>
        <PanelTools names="pan zoom | walk orbit steps | camera ortho persp" />
        <Row $gap={1}>
          <Indent><Glyph name="view" size={10} /></Indent>
          <DropDown value="未保存的当前视图" label="视图" />
        </Row>
      </PanelRows>
    </Panel>
  </>
);

const ToolPalettes = () => (
  <Palettes>
    <Tabs role="tablist">
      {tabs.map((tab, i) => (
        <Tab key={tab} role="tab" aria-selected={i === 1} $active={i === 1}>
          <TabText>{tab}</TabText>
        </Tab>
      ))}
      <TabGrip />
      <TabGrip />
    </Tabs>
    <PaletteMain>
      <PaletteBar>
        <MiniButton aria-label="最小化"><Glyph name="min" size={6} /></MiniButton>
        <PaletteGrip />
        <MiniButton aria-label="关闭"><Glyph name="close" size={6} /></MiniButton>
      </PaletteBar>
      <PaletteContent>
        <Lamps>
          {lamps.map((lamp, i) => (
            <LampItem key={lamp}>
              <LampButton>
                <Lamp dark={i === 7} />
                {lamp}
              </LampButton>
            </LampItem>
          ))}
        </Lamps>
        <Scroll>
          <ScrollEnd aria-label="向上"><Glyph name="up" size={8} /></ScrollEnd>
          <Thumb />
          <Spacer />
          <ScrollEnd aria-label="向下"><Glyph name="down" size={8} /></ScrollEnd>
        </Scroll>
      </PaletteContent>
    </PaletteMain>
  </Palettes>
);

const App = () => {
  return (
    <Window>
      <GlobalStyle />
      <TitleBar>
        <Glyph name="logo" size={10} />
        <Title>AutoCAD 2008 - [Drawing3.dwg]</Title>
        <Caption>
          <CaptionButton aria-label="最小化"><Glyph name="min" size={7} /></CaptionButton>
          <CaptionButton aria-label="最大化"><Glyph name="max" size={7} /></CaptionButton>
          <CaptionButton aria-label="关闭"><Glyph name="close" size={7} /></CaptionButton>
        </Caption>
      </TitleBar>
      <MenuBar>
        <MenuLogo><Glyph name="doc" size={11} /></MenuLogo>
        {menus.map((menu) => (
          <MenuItem key={menu}>{menu}</MenuItem>
        ))}
        <Spacer />
        <Search placeholder="键入问题以获取帮助" aria-label="搜索" />
        <InfoGroup>
          <InfoButton $wide aria-label="查找"><Glyph name="find" size={8} /><Glyph name="down" size={7} /></InfoButton>
          <InfoButton aria-label="通讯中心"><Glyph name="comm" size={7} /></InfoButton>
          <InfoButton aria-label="收藏夹"><Glyph name="star" size={7} /></InfoButton>
        </InfoGroup>
        <Caption>
          <CaptionButton aria-label="最小化图形"><Glyph name="min" size={7} /></CaptionButton>
          <CaptionButton aria-label="还原图形"><Glyph name="restore" size={7} /></CaptionButton>
          <CaptionButton aria-label="关闭图形"><Glyph name="close" size={7} /></CaptionButton>
        </Caption>
      </MenuBar>
      <ToolRow>
        <Grip />
        <DropDown value="三维建模" label="工作空间" off width={106} size={8} />
        <Tools names="gear home" size={11} />
        <Grip />
        <Grip />
        <Tools
          names="page open save | print preview publish dwf | cut copy paste match brush | undo dot redo dot | pan zoom zoomWin zoomPrev | props sheet palette sheetSet markup calc | help"
          size={11}
        />
        <Grip />
        <Grip />
        <Tool aria-label="图层特性管理器" $faint><Glyph name="layers" size={11} /></Tool>
        <LayerDropDown />
        <Tool aria-label="layerGo"><Glyph name="layerGo" size={11} /></Tool>
      </ToolRow>
      <Body>
        <Workspace>
          <Stage>
            <ToolColumn>
              <Grip $flat />
              <Tools names={drawTools} size={11} />
              <ColumnEnd />
            </ToolColumn>
            <Canvas>
              <Drawing />
            </Canvas>
            <ToolColumn $right>
              <Grip $flat />
              <Tools names={modifyTools} size={11} />
              <ColumnEnd />
            </ToolColumn>
          </Stage>
          <Command>
            <Grip />
            <CommandText>
              <History>
                输入选项 [打开(O)/合并(J)/宽度(W)/编辑顶点(E)/拟合(F)/样条曲线(S)/非曲线化(D)/线型生成(L)/放弃(U)]:
              </History>
              <Prompt>
                <PromptInput
                  aria-label="命令行"
                  defaultValue="命令:  PEDIT 选择多段线或 [多条(M)]: 选择多段线或 [多条(M)]: 选择多段线或 [多条(M)]:"
                />
                <HScroll>
                  <ScrollButton $h={12} aria-label="向左"><Glyph name="left" size={7} /></ScrollButton>
                  <HThumb />
                  <Spacer />
                  <ScrollButton $h={12} aria-label="向右"><Glyph name="right" size={7} /></ScrollButton>
                </HScroll>
              </Prompt>
            </CommandText>
            <VScroll>
              <ScrollButton $w={10} aria-label="上一行"><Glyph name="up" size={7} /></ScrollButton>
              <ScrollButton $w={10} aria-label="下一行"><Glyph name="down" size={7} /></ScrollButton>
            </VScroll>
          </Command>
        </Workspace>
        <Side>
          <Dashboard />
          <ToolPalettes />
        </Side>
      </Body>
      <StatusBar>
        <Coords>1235.11, 360.51, 0.00</Coords>
        {toggles.map(([name, on]) => (
          <Toggle key={name} $on={on} aria-pressed={on}>{name}</Toggle>
        ))}
        <Tools names="model paper updown" size={11} />
        <Spacer />
        <Scale>
          <ScaleLabel>注释比例:</ScaleLabel>1:1
          <Glyph name="down" size={8} />
        </Scale>
        <Tools names="annot annotAuto" size={10} />
        <Tools names="unlock down clean" size={11} />
        <Glyph name="resize" size={9} />
      </StatusBar>
    </Window>
  );
};

export default App;
